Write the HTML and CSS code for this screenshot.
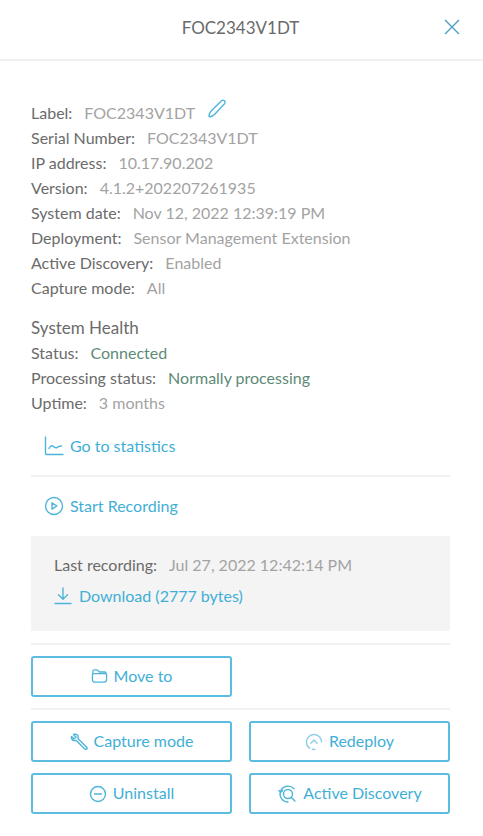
FILE: index.html
```html
<!DOCTYPE html>
<html lang="en">
<head>
<meta charset="utf-8">
<title>FOC2343V1DT</title>
<link rel="stylesheet" href="styles.css">
</head>
<body>
<div class="panel">
  <header class="head">
    <h1 class="title">FOC2343V1DT</h1>
    <button class="close" aria-label="Close">
      <svg viewBox="0 0 16 16" width="16" height="16"><path d="M1 1l14 14M15 1L1 15"/></svg>
    </button>
  </header>
  <main class="body">
    <section class="info">
      <div class="row"><span class="k">Label:</span><span class="v">FOC2343V1DT</span>
        <svg class="pencil" viewBox="0 0 20 20" width="20" height="20"><path d="M14.5 1.8c1-.9 2.2-.9 3 0 .8.8.8 2 0 3L7.5 15.5c-1.2 1.2-2.9 2-4.8 2.2-.6 0-.8-.3-.7-.8.2-1.9.9-3.600 2.100-4.800z"/></svg>
      </div>
      <div class="row"><span class="k">Serial Number:</span><span class="v">FOC2343V1DT</span></div>
      <div class="row"><span class="k">IP address:</span><span class="v">10.17.90.202</span></div>
      <div class="row"><span class="k">Version:</span><span class="v">4.1.2+202207261935</span></div>
      <div class="row"><span class="k">System date:</span><span class="v">Nov 12, 2022 12:39:19 PM</span></div>
      <div class="row"><span class="k">Deployment:</span><span class="v">Sensor Management Extension</span></div>
      <div class="row"><span class="k">Active Discovery:</span><span class="v">Enabled</span></div>
      <div class="row"><span class="k">Capture mode:</span><span class="v">All</span></div>
    </section>
    <section class="health">
      <h2 class="sub">System Health</h2>
      <div class="row"><span class="k">Status:</span><span class="v ok">Connected</span></div>
      <div class="row"><span class="k">Processing status:</span><span class="v ok">Normally processing</span></div>
      <div class="row"><span class="k">Uptime:</span><span class="v">3 months</span></div>
    </section>
    <a class="link stats">
      <svg class="ic" viewBox="0 0 20 20" width="20" height="20"><path d="M1.500 1v16.500a1 1 0 0 0 1 1H19M5 12.500c1.500-3 3-3.500 4.500-2s2.500 1.500 3.500 1 2.500-1.500 4.500-1.500"/></svg>
      Go to statistics
    </a>
    <hr class="rule">
    <a class="link rec">
      <svg class="ic" viewBox="0 0 20 20" width="20" height="20"><circle cx="10" cy="10" r="8.500"/><path d="M8 6.800l4.800 3.200L8 13.200z"/></svg>
      Start Recording
    </a>
    <div class="last">
      <div class="row"><span class="k">Last recording:</span><span class="v">Jul 27, 2022 12:42:14 PM</span></div>
      <a class="link dl">
        <svg class="ic" viewBox="0 0 18 18" width="18" height="18"><path d="M9 1v11M4.500 7.800L9 12.300l4.500-4.500M1 16.500h16"/></svg>
        Download (2777 bytes)
      </a>
    </div>
    <hr class="rule r-a">
    <div class="btns">
      <button class="btn">
        <svg class="ic" viewBox="0 0 18 18" width="17" height="17"><path d="M2 6V3.500A1.500 1.500 0 0 1 3.500 2h3.300l2 2.200h5.700A1.500 1.500 0 0 1 16 5.700V6M3 6h12a1.500 1.500 0 0 1 1.500 1.500v5A2.500 2.500 0 0 1 14 15H4a2.500 2.500 0 0 1-2.500-2.500v-5A1.500 1.500 0 0 1 3 6z"/></svg>
        <span class="lbl">Move to</span>
      </button>
    </div>
    <hr class="rule r-b">
    <div class="grid">
      <button class="btn">
        <svg class="ic" viewBox="0 0 18 18" width="18" height="18"><path d="M1.500 3.500L4 6l2-2-2.500-2.500C5.500.8 7.500 1.300 8 3c.3 1 .2 1.800-.1 2.500l8.800 8.700c.6.600.6 1.300 0 1.900s-1.300.6-1.900 0L6 7.300c-1 .4-2.500.4-3.500-.4C1.500 6 1.100 4.800 1.500 3.500z"/></svg>
        <span class="lbl">Capture mode</span>
      </button>
      <button class="btn">
        <svg class="ic light" viewBox="0 0 18 18" width="18" height="18"><path d="M4.600 15.100A7.500 7.500 0 1 1 16.500 9M5.800 10.200L9 7l3.200 3.200M7.500 16.200a7.500 7.500 0 0 0 2.500.2"/></svg>
        <span class="lbl">Redeploy</span>
      </button>
      <button class="btn">
        <svg class="ic" viewBox="0 0 18 18" width="18" height="18"><circle cx="9" cy="9" r="7.500"/><path d="M5.500 9h7"/></svg>
        <span class="lbl">Uninstall</span>
      </button>
      <button class="btn">
        <svg class="ic" viewBox="0 0 20 20" width="20" height="20"><circle cx="11" cy="10" r="4.500"/><path d="M14.200 13.200L18 17M3.600 7.200A8 8 0 0 1 17 4.800M3.200 8.500A8 8 0 0 0 11 18M1.800 6.600l1.800 1.600 1.900-1.600"/></svg>
        <span class="lbl">Active Discovery</span>
      </button>
    </div>
  </main>
</div>
</body>
</html>
```
FILE: styles.css
```css
* { box-sizing: border-box; }
html, body { margin: 0; padding: 0; background: #fff; }
body {
  width: 483px;
  height: 836px;
  overflow: hidden;
  font-family: Lato, "Open Sans", sans-serif;
  font-size: 16px;
  color: #6e6e6e;
}
.panel { display: flex; flex-direction: column; height: 100%; }
.head {
  height: 61px;
  flex: none;
  display: flex;
  align-items: center;
  justify-content: center;
  position: relative;
  border-bottom: 2px solid #f0f0f0;
}
.title { margin: 0 2px 3px 0; font-size: 17px; font-weight: 400; color: #6a6a6a; line-height: 56px; }
.close {
  position: absolute;
  right: 23px;
  top: 19px;
  padding: 0;
  border: 0;
  background: none;
  display: flex;
}
.close path { stroke: #4a9fc0; stroke-width: 1.4; fill: none; }
.body { padding: 39px 33px 0 31px; display: flex; flex-direction: column; }
.row { height: 25px; line-height: 25px; display: flex; align-items: center; white-space: nowrap; }
.k { color: #6b6b6b; margin-right: 12px; }
.v { color: #a3a3a3; }
.v.ok { color: #5d8a76; }
.pencil { margin-left: 12px; margin-top: -7px; }
.pencil path { fill: none; stroke: #4db5d9; stroke-width: 1.4; }
.health { margin-top: 15px; }
.sub { margin: 0; font-size: 17px; font-weight: 400; color: #6b6b6b; line-height: 25px; }
.link {
  display: flex;
  align-items: center;
  gap: 6px;
  color: #3fafd6;
  font-size: 16px;
  line-height: 24px;
  white-space: nowrap;
}
.ic { flex: none; fill: none; stroke: #4db5d9; stroke-width: 1.4; stroke-linecap: round; stroke-linejoin: round; }
.ic.light { stroke: #8fd0e6; }
.stats { margin: 19px 0 0 13px; }
.rule { width: 100%; height: 2px; margin: 0; border: 0; background: #f1f1f1; }
.stats + .rule { margin-top: 17px; }
.rec { margin: 17px 0 0 13px; }
.last {
  margin-top: 18px;
  height: 95px;
  padding: 16px 23px 0;
  background: #f4f4f4;
}
.dl { margin-top: 7px; gap: 7px; }
.r-a { margin-top: 12px; }
.btns { margin-top: 11px; width: 201px; }
.r-b { margin-top: 11px; }
.grid {
  margin-top: 11px;
  display: grid;
  grid-template-columns: 201px 201px;
  column-gap: 17px;
  row-gap: 11px;
}
.btn {
  width: 201px;
  height: 41px;
  display: flex;
  align-items: center;
  justify-content: center;
  gap: 6px;
  background: #fff;
  border: 2px solid #5cbde0;
  border-radius: 3px;
  font-family: inherit;
  font-size: 16px;
  color: #3fafd6;
  padding: 0;
}
.lbl { margin-bottom: 2px; }
```
